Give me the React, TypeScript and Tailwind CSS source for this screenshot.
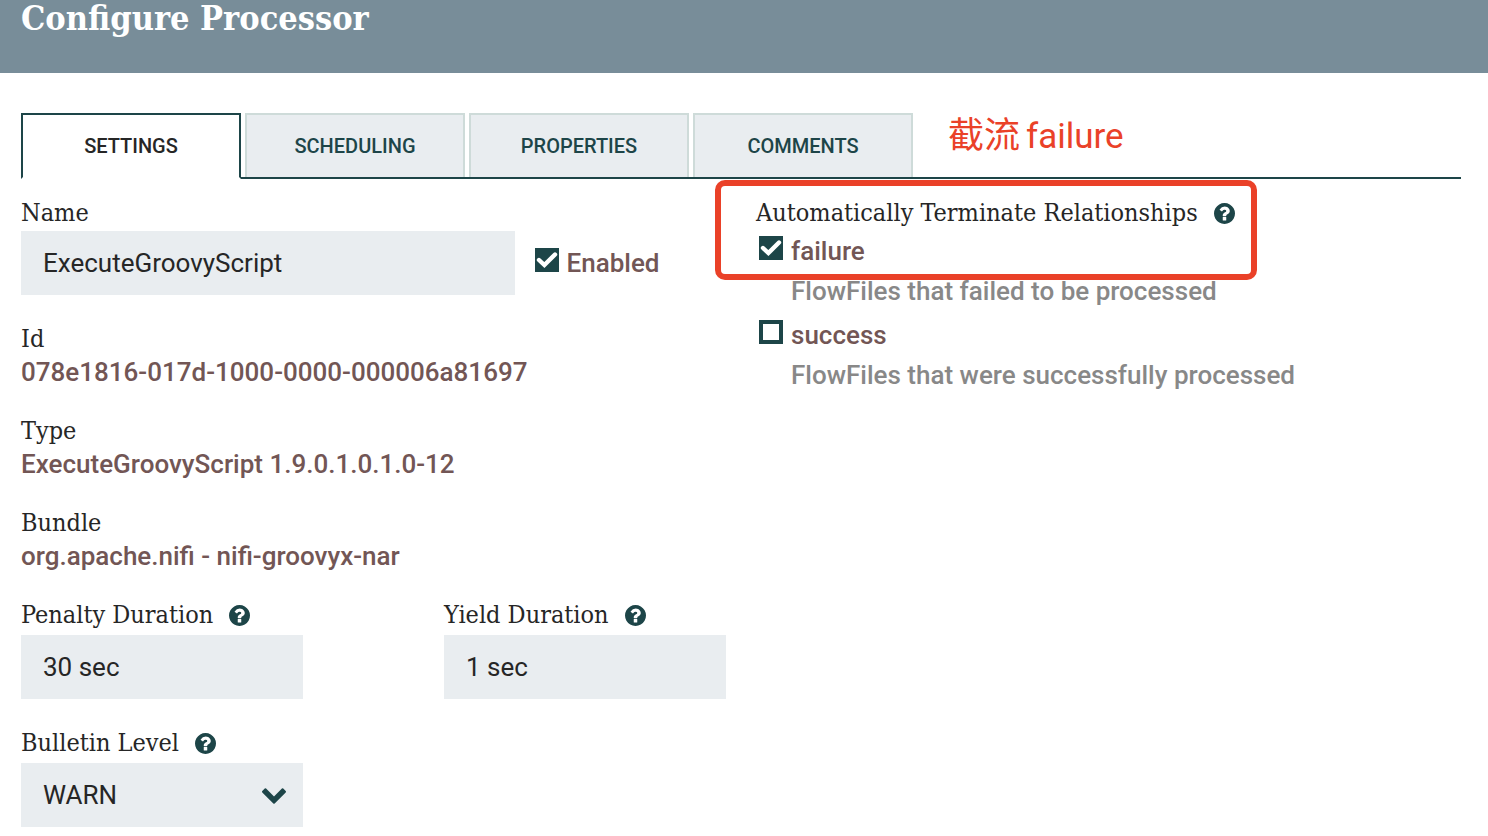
import { useState } from 'react';
import type { ReactNode } from 'react';

const TABS = ['SETTINGS', 'SCHEDULING', 'PROPERTIES', 'COMMENTS'];

function HelpIcon() {
  return (
    <svg viewBox="0 128 1536 1536" className="size-[21px] shrink-0 fill-[#1d4548]" role="img" aria-label="Help">
      <path d="M896 1376v-192q0-14-9-23t-23-9h-192q-14 0-23 9t-9 23v192q0 14 9 23t23 9h192q14 0 23-9t9-23zm256-672q0-88-55.500-163t-138.500-116-170-41q-243 0-371 213-15 24 8 42l132 100q7 6 19 6 16 0 25-12 53-68 86-92 34-24 86-24 48 0 85.500 26t37.500 59q0 38-20 61t-68 45q-63 28-115.500 86.500t-52.500 125.500v36q0 14 9 23t23 9h192q14 0 23-9t9-23q0-19 21.500-49.500t54.500-49.500q32-18 49-28.500t46-35 44.500-48 28-60.500 12.500-81zm384 192q0 209-103 385.500t-279.500 279.500-385.500 103-385.500-103-279.500-279.500-103-385.500 103-385.500 279.500-279.500 385.500-103 385.500 103 279.500 279.500 103 385.500z" />
    </svg>
  );
}

const LABEL =
  "flex h-9 items-center gap-4 whitespace-nowrap font-['Roboto_Slab','DejaVu_Serif_Condensed','DejaVu_Serif',serif] text-[25px] text-[#262626]";
const FIELD = 'h-16 w-full rounded-none bg-[#e9edf0] px-[22px] text-[26px] text-[#262626] outline-none';
const VALUE = 'text-[26px] leading-[30px] font-medium text-[#725655]';

function ReadOnly({ label, children }: { label: string; children: ReactNode }) {
  return (
    <div>
      <dt className={LABEL}>{label}</dt>
      <dd className={VALUE}>{children}</dd>
    </div>
  );
}

function Check({ id, label, initial }: { id: string; label: string; initial: boolean }) {
  const [on, setOn] = useState(initial);
  return (
    <div className="flex h-10 items-center gap-2">
      <span className="mb-1.5 grid size-6 shrink-0">
        <input
          id={id}
          type="checkbox"
          checked={on}
          onChange={() => setOn(!on)}
          className="col-start-1 row-start-1 size-6 appearance-none border-4 border-[#1d4548] bg-white checked:bg-[#1d4548]"
        />
        {on && (
          <svg viewBox="0 0 24 24" className="pointer-events-none col-start-1 row-start-1 size-6" aria-hidden="true">
            <path d="M4 12 9.400 17 20 6.500" fill="none" stroke="white" strokeWidth="4.400" strokeLinecap="round" />
          </svg>
        )}
      </span>
      <label htmlFor={id} className={VALUE}>
        {label}
      </label>
    </div>
  );
}

function Duration({ id, label, value }: { id: string; label: string; value: string }) {
  return (
    <div className="flex w-2/5 flex-col gap-0.5">
      <label htmlFor={id} className={LABEL}>
        {label} <HelpIcon />
      </label>
      <input id={id} type="text" defaultValue={value} className={FIELD} />
    </div>
  );
}

function Relationship({ name, description, terminated }: { name: string; description: string; terminated: boolean }) {
  return (
    <li className="pl-[3px]">
      <Check id={`relationship-${name}`} label={name} initial={terminated} />
      <p className="flex h-10 items-center pl-8 text-[26px] font-medium whitespace-nowrap text-[#888888]">{description}</p>
    </li>
  );
}

export default function App() {
  const [tab, setTab] = useState(TABS[0]);
  return (
    <div className="bg-white font-[Roboto,sans-serif]">
      <header className="h-[73px] bg-[#788d99] pl-[21px]">
        <h1 className="font-['Roboto_Slab','DejaVu_Serif_Condensed','DejaVu_Serif',serif] text-[34px] leading-9 font-bold text-white">
          Configure Processor
        </h1>
      </header>
      <main className="pt-10 pr-[27px] pb-2 pl-[21px]">
        <div className="flex border-b-2 border-[#1d4548]">
          <div role="tablist" className="flex gap-1">
            {TABS.map((name) => (
              <button
                key={name}
                type="button"
                role="tab"
                aria-selected={name === tab}
                onClick={() => setTab(name)}
                className={
                  name === tab
                    ? '-mb-0.5 h-[66px] w-[220px] border-2 border-[#1d4548] border-b-white bg-white text-xl font-medium text-[#262626]'
                    : 'h-16 w-[220px] border-2 border-b-0 border-[#cedbd9] bg-[#e9edf0] text-xl font-medium text-[#1d4548]'
                }
              >
                {name}
              </button>
            ))}
          </div>
          <p className="ml-[35px] flex items-baseline gap-1.5 text-[35px] leading-[38px] whitespace-nowrap text-[#ea4128]">
            <span className="font-['Noto_Sans_CJK_SC',sans-serif] text-[36px]">截流</span>
            <span>failure</span>
          </p>
        </div>

        <div className="grid grid-cols-2 gap-[30px] pt-4">
          <div className="flex flex-col gap-[26px]">
            <div>
              <label htmlFor="name" className={LABEL}>
                Name
              </label>
              <div className="flex items-center gap-5">
                <div className="w-[70%] shrink-0">
                  <input id="name" type="text" defaultValue="ExecuteGroovyScript" className={FIELD} />
                </div>
                <Check id="enabled" label="Enabled" initial />
              </div>
            </div>
            <dl className="flex flex-col gap-[26px]">
              <ReadOnly label="Id">078e1816-017d-1000-0000-000006a81697</ReadOnly>
              <ReadOnly label="Type">ExecuteGroovyScript 1.9.0.1.0.1.0-12</ReadOnly>
              <ReadOnly label="Bundle">org.apache.nifi - nifi-groovyx-nar</ReadOnly>
            </dl>
            <div className="flex gap-[20%]">
              <Duration id="penalty" label="Penalty Duration" value="30 sec" />
              <Duration id="yield" label="Yield Duration" value="1 sec" />
            </div>
            <div className="flex w-2/5 flex-col gap-0.5">
              <label htmlFor="bulletin" className={LABEL}>
                Bulletin Level <HelpIcon />
              </label>
              <div className="relative">
                <select id="bulletin" defaultValue="WARN" className={`${FIELD} appearance-none`}>
                  <option>DEBUG</option>
                  <option>INFO</option>
                  <option>WARN</option>
                  <option>ERROR</option>
                  <option>NONE</option>
                </select>
                <svg
                  viewBox="90 533 1612 1035"
                  className="pointer-events-none absolute top-[25px] right-[17px] h-4 w-6 fill-[#1d4548]"
                  aria-hidden="true"
                >
                  <path d="M1683 808l-742 741q-19 19-45 19t-45-19l-742-741q-19-19-19-45.500t19-45.500l166-165q19-19 45-19t45 19l531 531 531-531q19-19 45-19t45 19l166 165q19 19 19 45.500t-19 45.500z" />
                </svg>
              </div>
            </div>
          </div>

          <section className="relative">
            <h2 className={LABEL}>
              Automatically Terminate Relationships <HelpIcon />
            </h2>
            <ul className="flex flex-col gap-1">
              <Relationship name="failure" description="FlowFiles that failed to be processed" terminated />
              <Relationship name="success" description="FlowFiles that were successfully processed" terminated={false} />
            </ul>
            <div className="pointer-events-none absolute -top-[15px] -left-[41px] h-[100px] w-[542px] rounded-[10px] border-6 border-[#ea4128]" />
          </section>
        </div>
      </main>
    </div>
  );
}
